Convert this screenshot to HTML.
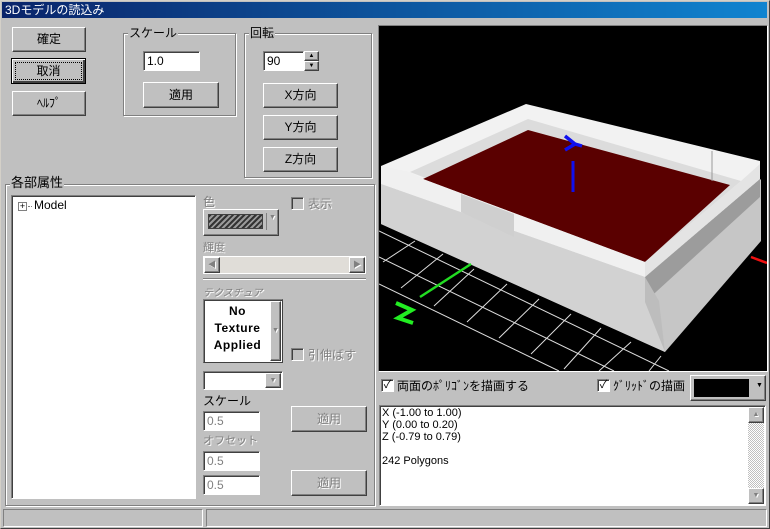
<!DOCTYPE html>
<html><head><meta charset="utf-8"><style>
*{box-sizing:border-box;margin:0;padding:0}
body{width:770px;height:529px;background:#d4d0c8;font-family:"Liberation Sans","Noto Sans CJK JP",sans-serif;font-size:12px;color:#000;position:relative;overflow:hidden}
.win{position:absolute;left:0;top:0;width:770px;height:529px;border:1px solid;border-color:#d4d0c8 #404040 #404040 #d4d0c8;background:#c0c0c0}
.title{position:absolute;left:2px;top:2px;width:765px;height:16px;background:linear-gradient(90deg,#0a246a,#1084d0);color:#fff;font-size:12px;line-height:16px;padding-left:3px}
.a{position:absolute}
.btn{position:absolute;background:#c0c0c0;border:1px solid;border-color:#fff #404040 #404040 #fff;box-shadow:inset -1px -1px #808080;text-align:center;font-size:12px}
.dis{color:#808080;text-shadow:1px 1px #fff}
.grp{position:absolute;border:1px solid #808080;box-shadow:1px 1px #fff,inset 1px 1px #fff}
.lbl{position:absolute;background:#c0c0c0;padding:0 1px;font-size:12px;line-height:14px}
.edit{position:absolute;background:#fff;border:1px solid;border-color:#808080 #fff #fff #808080;box-shadow:inset 1px 1px #404040;font-size:12px;padding:2px 0 0 3px;line-height:14px}
.cb{position:absolute;width:13px;height:13px;background:#fff;border:1px solid;border-color:#808080 #fff #fff #808080;box-shadow:inset 1px 1px #404040;font-size:11px;line-height:11px;text-align:center}
.cbd{background:#c0c0c0}
</style></head><body>
<div class="win"></div>
<div class="title">3Dモデルの読込み</div>

<div class="btn" style="left:12px;top:27px;width:74px;height:25px;line-height:23px">確定</div>
<div class="btn" style="left:11px;top:58px;width:75px;height:26px;line-height:22px;border:1px solid #000;box-shadow:inset 1px 1px #fff,inset -2px -2px #404040"><span style="display:block;margin:3px;border:1px dotted #000;line-height:16px">取消</span></div>
<div class="btn" style="left:12px;top:91px;width:74px;height:25px;line-height:23px">ﾍﾙﾌﾟ</div>

<div class="grp" style="left:123px;top:33px;width:113px;height:83px"></div>
<div class="lbl" style="left:128px;top:26px">スケール</div>
<div class="edit" style="left:143px;top:51px;width:57px;height:20px">1.0</div>
<div class="btn" style="left:143px;top:82px;width:76px;height:26px;line-height:24px">適用</div>

<div class="grp" style="left:244px;top:33px;width:128px;height:145px"></div>
<div class="lbl" style="left:249px;top:26px">回転</div>
<div class="edit" style="left:263px;top:51px;width:41px;height:20px">90</div>
<div class="btn" style="left:304px;top:51px;width:15px;height:10px;font-size:6px;line-height:8px">▲</div>
<div class="btn" style="left:304px;top:61px;width:15px;height:10px;font-size:6px;line-height:8px">▼</div>
<div class="btn" style="left:263px;top:83px;width:75px;height:25px;line-height:23px">X方向</div>
<div class="btn" style="left:263px;top:115px;width:75px;height:25px;line-height:23px">Y方向</div>
<div class="btn" style="left:263px;top:147px;width:75px;height:25px;line-height:23px">Z方向</div>

<div class="grp" style="left:5px;top:184px;width:370px;height:322px"></div>
<div class="lbl" style="left:10px;top:176px;font-size:13px">各部属性</div>
<div class="edit" style="left:11px;top:195px;width:185px;height:304px;padding:0"></div>
<div class="a" style="left:18px;top:202px;width:9px;height:9px;border:1px solid #808080;background:#fff;font-size:9px;line-height:7px;text-align:center">+</div>
<div class="a" style="left:28px;top:206px;width:4px;border-top:1px dotted #808080"></div>
<div class="a" style="left:34px;top:198px;font-size:12px">Model</div>

<div class="a dis" style="left:203px;top:193px">色</div>
<div class="cb cbd" style="left:291px;top:197px"></div>
<div class="a dis" style="left:308px;top:195px">表示</div>
<div class="btn" style="left:203px;top:209px;width:76px;height:27px"></div>
<div class="a" style="left:208px;top:214px;width:55px;height:15px;border:1px solid #404040;background:repeating-linear-gradient(135deg,#333 0 2px,#999 2px 4px)"></div>
<div class="a" style="left:266px;top:213px;width:1px;height:17px;background:#808080"></div>
<div class="a dis" style="left:269px;top:214px;font-size:7px">▼</div>
<div class="a dis" style="left:203px;top:239px;font-size:11px">輝度</div>
<div class="a" style="left:203px;top:256px;width:163px;height:18px;background:#e0ddd8;border:1px solid #fff"></div>
<div class="btn dis" style="left:204px;top:257px;width:16px;height:16px;font-size:8px;line-height:14px">◀</div>
<div class="btn dis" style="left:349px;top:257px;width:16px;height:16px;font-size:8px;line-height:14px">▶</div>
<div class="a" style="left:203px;top:278px;width:163px;height:2px;border-top:1px solid #808080;border-bottom:1px solid #fff"></div>
<div class="a dis" style="left:203px;top:284px;font-size:10px;font-style:italic">テクスチュア</div>
<div class="a" style="left:203px;top:299px;width:80px;height:64px;background:#fff;border:1px solid;border-color:#808080 #404040 #404040 #808080;box-shadow:inset 1px 1px #404040"></div>
<div class="a" style="left:205px;top:303px;width:65px;text-align:center;font-weight:bold;font-size:12px;line-height:17px;letter-spacing:0.5px">No<br>Texture<br>Applied</div>
<div class="btn dis" style="left:270px;top:301px;width:11px;height:60px;font-size:7px;line-height:58px">▼</div>
<div class="cb cbd" style="left:291px;top:348px"></div>
<div class="a dis" style="left:308px;top:346px">引伸ばす</div>
<div class="edit" style="left:203px;top:371px;width:80px;height:19px"></div>
<div class="btn dis" style="left:265px;top:373px;width:16px;height:15px;font-size:7px;line-height:13px">▼</div>
<div class="a" style="left:203px;top:392px">スケール</div>
<div class="edit dis" style="left:203px;top:411px;width:57px;height:20px;text-shadow:none">0.5</div>
<div class="btn dis" style="left:291px;top:406px;width:76px;height:26px;line-height:24px">適用</div>
<div class="a dis" style="left:203px;top:432px;font-size:11px">オフセット</div>
<div class="edit dis" style="left:203px;top:451px;width:57px;height:20px;text-shadow:none">0.5</div>
<div class="edit dis" style="left:203px;top:475px;width:57px;height:20px;text-shadow:none">0.5</div>
<div class="btn dis" style="left:291px;top:470px;width:76px;height:26px;line-height:24px">適用</div>

<div class="a" style="left:378px;top:25px;width:390px;height:347px;border:1px solid;border-color:#808080 #fff #fff #808080;background:#000;overflow:hidden">
<svg width="388" height="345" viewBox="0 0 388 345" style="display:block">
<g stroke="#ddd" stroke-width="1" fill="none">
<line x1="0" y1="205" x2="290" y2="345"/><line x1="0" y1="231" x2="235" y2="345"/><line x1="0" y1="258" x2="180" y2="345"/>
<line x1="36" y1="215" x2="4" y2="236"/><line x1="64" y1="228" x2="22" y2="262"/><line x1="95" y1="243" x2="55" y2="280"/><line x1="128" y1="258" x2="88" y2="296"/><line x1="160" y1="273" x2="120" y2="312"/><line x1="192" y1="288" x2="152" y2="328"/><line x1="222" y1="302" x2="185" y2="343"/><line x1="252" y1="316" x2="220" y2="345"/><line x1="282" y1="330" x2="270" y2="345"/>
</g>
<polygon points="2,158 2,198 286,326 382,215 382,153 266,251" fill="#c6c6c6"/>
<polygon points="2,158 2,198 286,326 280,280 266,251" fill="#d2d2d2"/>
<polygon points="266,251 381,153 381,171 266,276" fill="#9c9c9c"/>
<polygon points="266,251 266,276 286,326 280,275" fill="#bdbdbd"/>
<polygon points="2,140 147,78 381,135 381,153 266,251 2,158" fill="#f2f2f2"/>
<polygon points="31,146 149,93 362,155 266,236" fill="#dcdcdc"/>
<polygon points="44,153 149,104 351,159 266,236" fill="#5a0000"/>
<polygon points="2,140 31,146 44,153 266,236 266,251 2,158" fill="#f0f0f0"/>
<polygon points="266,236 362,155 381,138 381,153 266,251" fill="#e4e4e4"/>
<polygon points="82,168 135,188 135,211 82,186" fill="#cfcfcf"/>
<line x1="333" y1="125" x2="333" y2="155" stroke="#999"/>
<line x1="92" y1="238" x2="41" y2="271" stroke="#22dd22" stroke-width="2.5"/>
<path d="M17,277 L33,284 L19,292 L34,297" stroke="#22ee22" stroke-width="4" fill="none"/>
<line x1="194" y1="135" x2="194" y2="166" stroke="#1010ee" stroke-width="3"/>
<path d="M186,110 L196,118 L186,124 M196,118 L203,120" stroke="#1010ee" stroke-width="3.5" fill="none"/>
<line x1="372" y1="231" x2="388" y2="237" stroke="#ee1010" stroke-width="2.5"/>
</svg></div>

<div class="cb" style="left:381px;top:379px">✓</div>
<div class="a" style="left:397px;top:377px">両面のﾎﾟﾘｺﾞﾝを描画する</div>
<div class="cb" style="left:597px;top:379px">✓</div>
<div class="a" style="left:613px;top:377px">ｸﾞﾘｯﾄﾞの描画</div>
<div class="btn" style="left:690px;top:375px;width:76px;height:26px"></div>
<div class="a" style="left:694px;top:379px;width:55px;height:18px;background:#000"></div>
<div class="a" style="left:756px;top:382px;font-size:7px">▼</div>

<div class="edit" style="left:379px;top:405px;width:387px;height:101px;font-size:11px;line-height:12px;padding:1px 0 0 2px">X (-1.00 to 1.00)<br>Y (0.00 to 0.20)<br>Z (-0.79 to 0.79)<br><br>242 Polygons</div>
<div class="a" style="left:748px;top:407px;width:16px;height:97px;background:repeating-conic-gradient(#c0c0c0 0 25%,#fff 0 50%) 0 0/2px 2px"></div>
<div class="btn dis" style="left:748px;top:407px;width:16px;height:16px;font-size:7px;line-height:14px">▲</div>
<div class="btn dis" style="left:748px;top:488px;width:16px;height:16px;font-size:7px;line-height:14px">▼</div>

<div class="a" style="left:3px;top:509px;width:200px;height:18px;border:1px solid;border-color:#808080 #fff #fff #808080"></div>
<div class="a" style="left:206px;top:509px;width:561px;height:18px;border:1px solid;border-color:#808080 #fff #fff #808080"></div>
</body></html>
